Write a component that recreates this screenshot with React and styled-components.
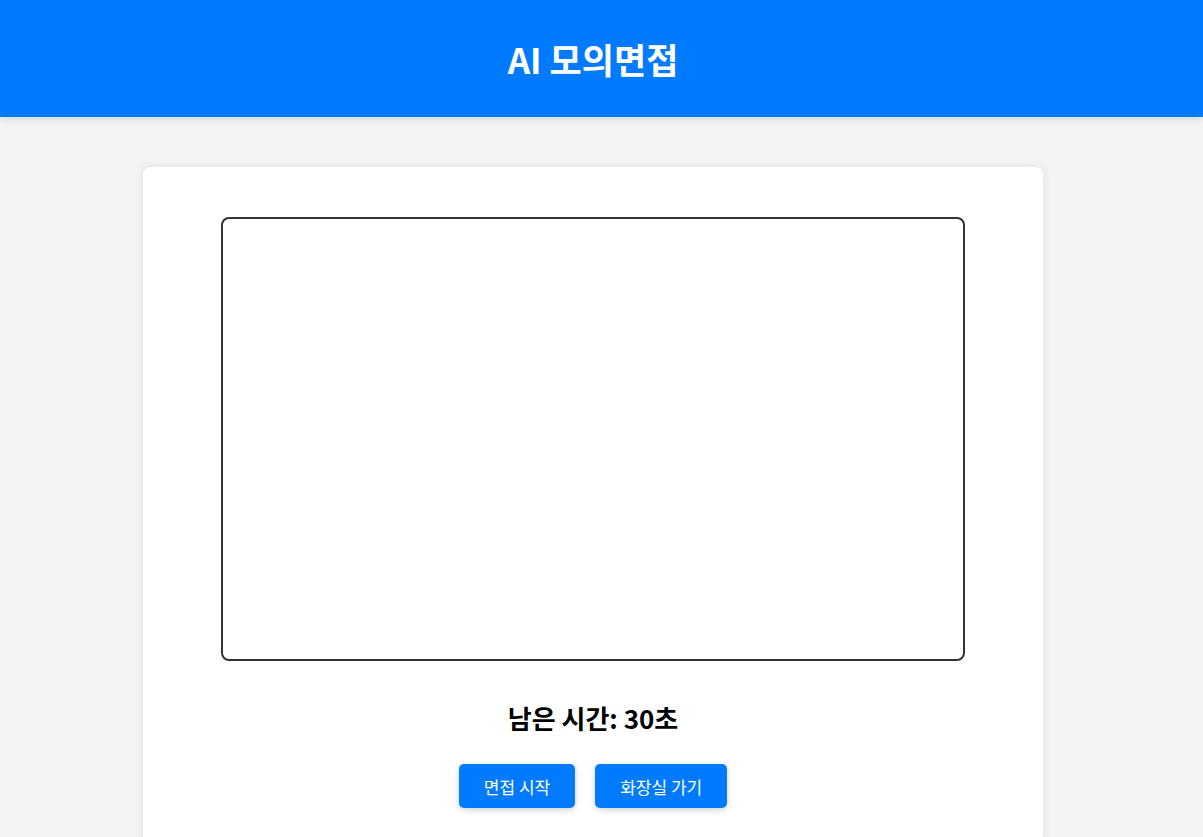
import React from "react";
import styled, { createGlobalStyle } from "styled-components";

const Global = createGlobalStyle`
  html, body { margin: 0; padding: 0; }
  body {
    background: #f3f3f3;
    font-family: "Noto Sans CJK KR", "Noto Sans", sans-serif;
  }
`;

const Header = styled.header`
  background: #007bff;
  color: #fff;
  height: 117px;
  box-sizing: border-box;
  padding-right: 17px;
  display: flex;
  align-items: center;
  justify-content: center;
  box-shadow: 0 2px 8px rgba(0, 0, 0, 0.12);
  position: relative;
`;

const Title = styled.h1`
  margin: 0;
  font-size: 35px;
  font-weight: 700;
  line-height: 1;
`;

const Page = styled.div`
  padding-right: 17px;
  padding-top: 50px;
`;

const Card = styled.main`
  width: 900px;
  box-sizing: border-box;
  margin: 0 auto 50px;
  padding: 50px 50px 40px;
  background: #fff;
  border-radius: 8px;
  box-shadow: 0 0 10px rgba(0, 0, 0, 0.08);
  display: flex;
  flex-direction: column;
  align-items: center;
`;

const Video = styled.div`
  width: 740px;
  height: 440px;
  border: 2px solid #333;
  border-radius: 8px;
  background: #fff;
`;

const Timer = styled.h2`
  margin: 39px 0 0;
  font-size: 26px;
  font-weight: 700;
  line-height: 35px;
  color: #000;
`;

const Buttons = styled.div`
  margin-top: 29px;
  display: flex;
  gap: 20px;
`;

const Button = styled.button`
  background: #007bff;
  color: #fff;
  border: none;
  border-radius: 5px;
  height: 44px;
  padding: 0 25px;
  font-family: inherit;
  font-size: 17px;
  cursor: pointer;
  box-shadow: 0 2px 6px rgba(0, 0, 0, 0.18);
`;

export default function App() {
  return (
    <>
      <Global />
      <Header>
        <Title>AI 모의면접</Title>
      </Header>
      <Page>
        <Card>
          <Video />
          <Timer>남은 시간: 30초</Timer>
          <Buttons>
            <Button>면접 시작</Button>
            <Button>화장실 가기</Button>
          </Buttons>
        </Card>
      </Page>
    </>
  );
}
